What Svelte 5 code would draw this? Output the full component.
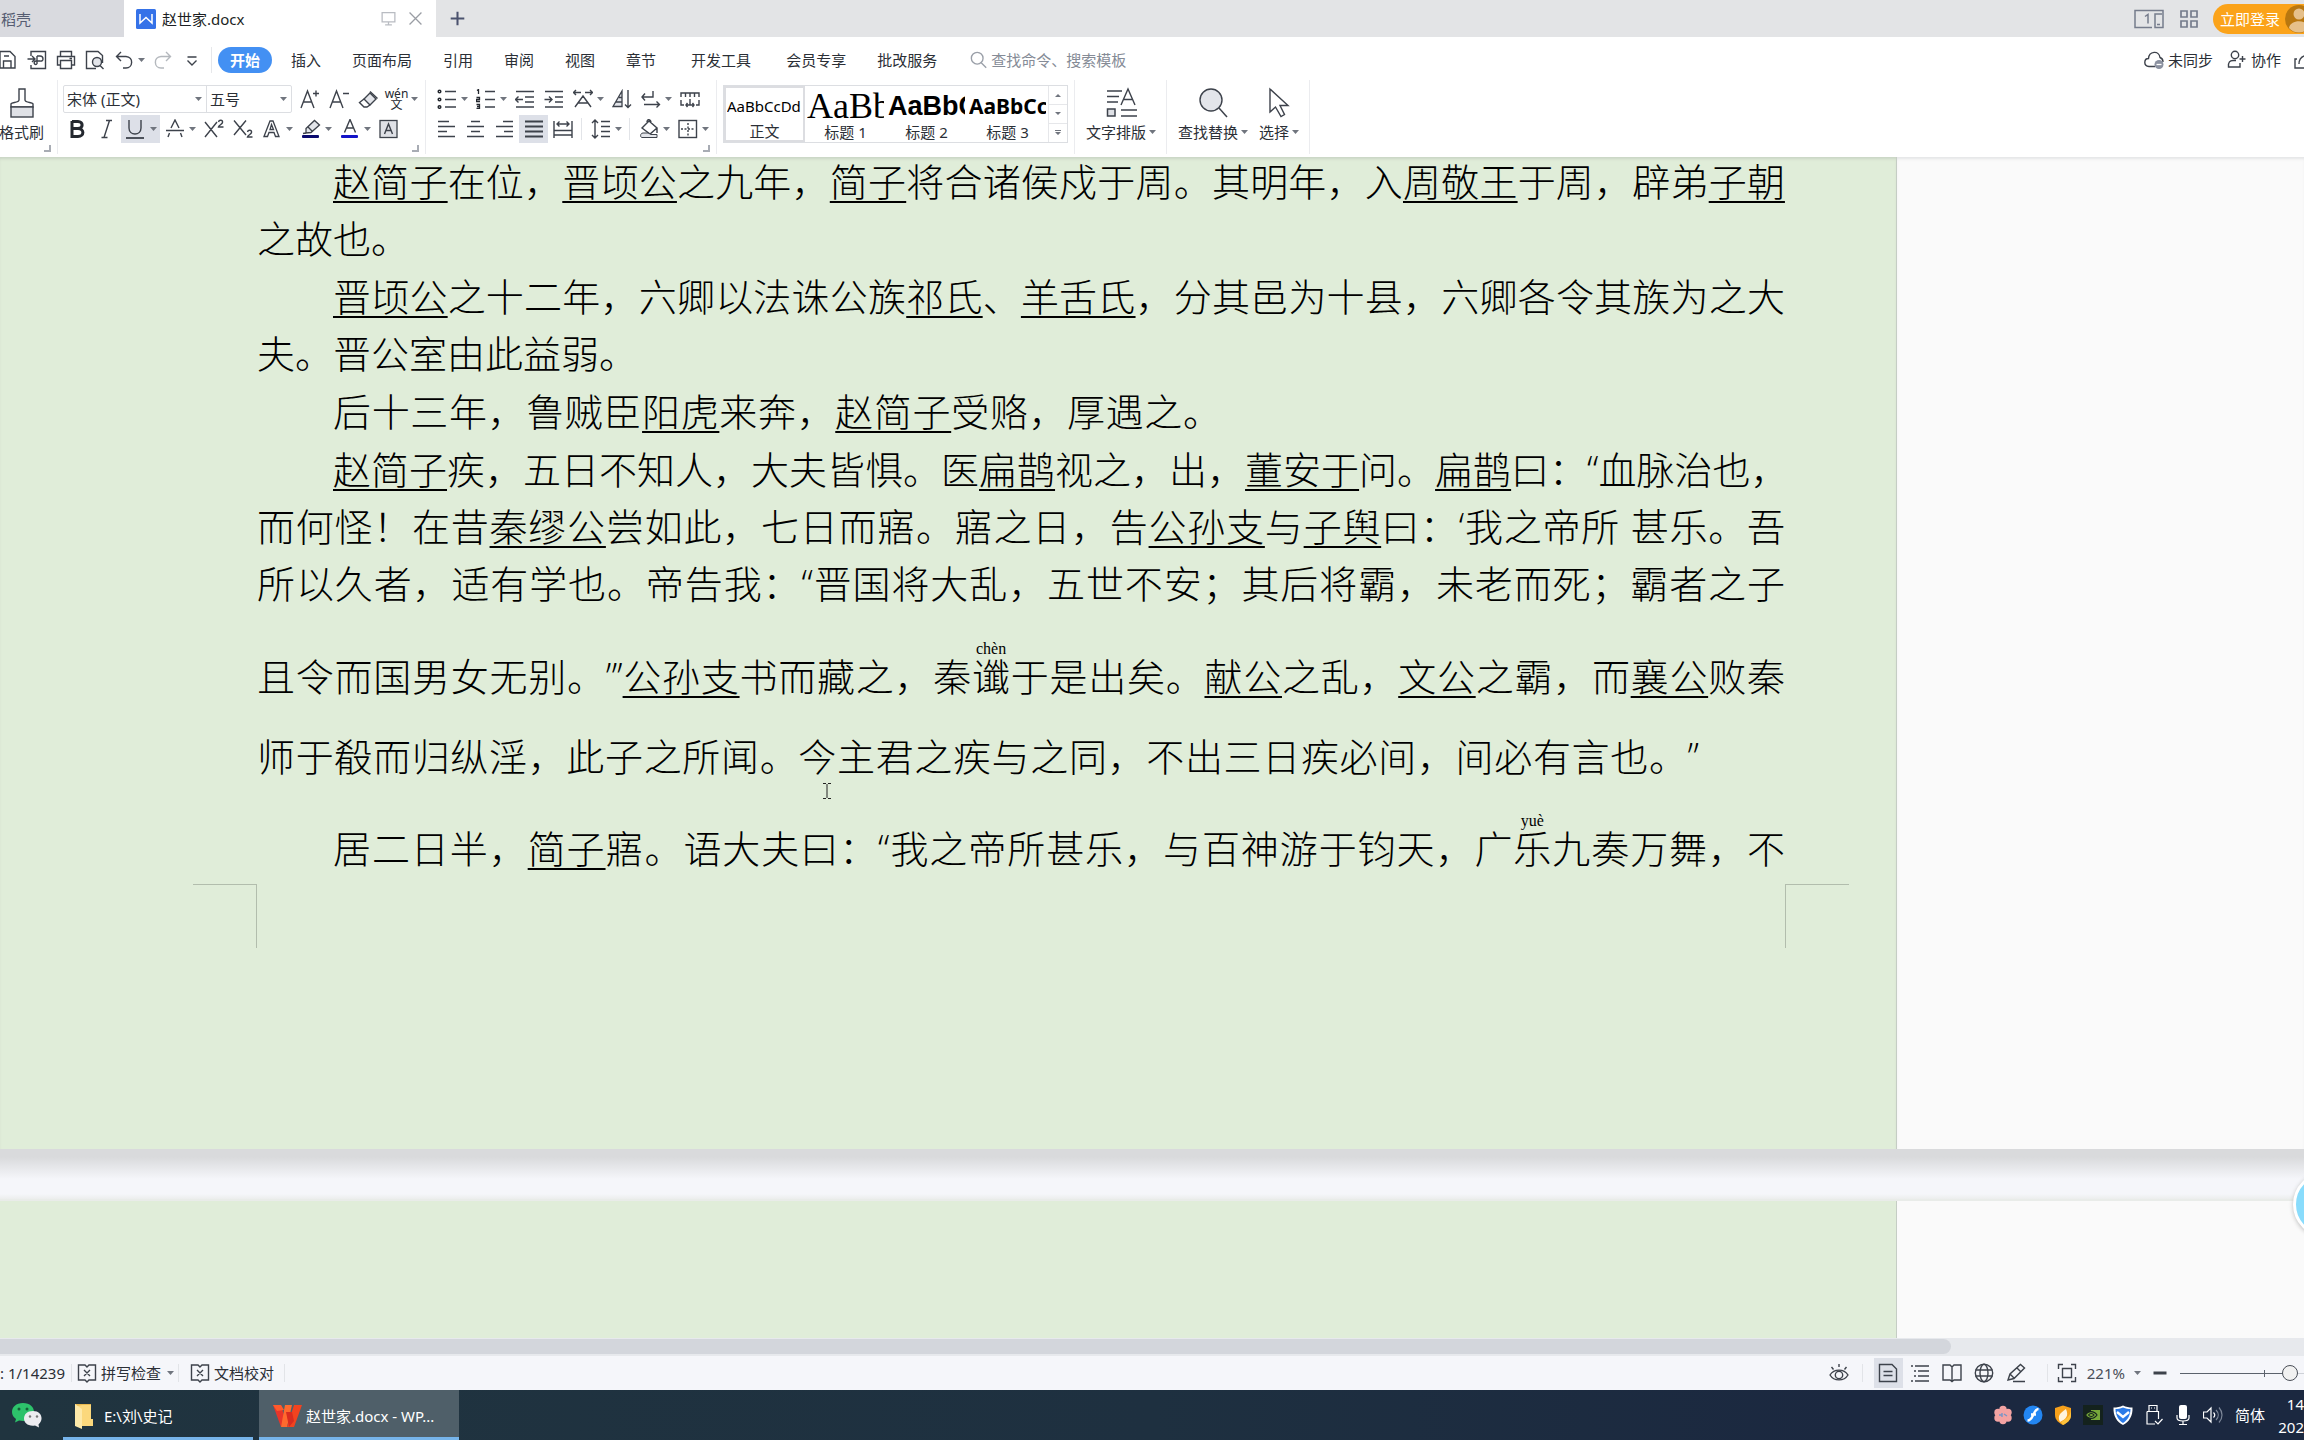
<script>
  const S = 'fill="none" stroke="#3d424b" stroke-width="1.4"';
  const T = 'fill="none" stroke="#3d424b" stroke-width="1.8"';

  const icons = {
    save: `<path ${S} d="M2 18V1.5H12L17 6.5V18H2M5.5 18V11H13V18M6 6H11"/>`,
    export: `<path ${S} d="M4 6V1.5H18.500V18.500H4V15M0.500 9H8M5 6L8 9L5 12M10 6V14M10 6H13C17 6 17 12 13 11H9C6 11 7 16 10 14"/>`,
    print: `<path ${S} d="M4.500 6V1.500H15.500V6M4 15H1.500V6.500H18.500V15H16M4.500 10.500H15.500V18.500H4.500ZM13.500 8.500H16"/>`,
    preview: `<path ${S} d="M11 18.500H1.500V1.500H13L17.500 5.500V13"/><circle cx="12" cy="12" r="4.500" fill="#e3e5ea" stroke="#3d424b" stroke-width="1.400"/><path ${S} d="M15 15.500L18.500 19"/>`,
    undo: `<path ${S} d="M7 2L2.500 6.500L7 11M3 6.500H12C20 7 19 18 12 18H9"/>`,
    redo: `<path fill="none" stroke="#b4b8bd" stroke-width="1.400" d="M13 2L17.500 6.500L13 11M17 6.500H8C0 7 1 18 8 18H11"/>`,
    more: `<path ${S} d="M5.500 7H14.500M5.500 10.500L10 15L14.500 10.500"/>`,
    growA: `<path ${S} d="M1 19L7.500 2L14 19M3.500 13H11.500M13 4.500H19M16 1.500V7.500"/>`,
    shrinkA: `<path ${S} d="M1 19L7.500 2L14 19M3.500 13H11.500M14 4.500H20"/>`,
    eraser: `<path fill="#e3e5ea" stroke="#3d424b" stroke-width="1.400" d="M6 10L12 4L18 10L12 16Z"/><path ${S} d="M6 10L1.500 13.500L6 18H9L12 16M12 2.500L19.500 9.500"/>`,
    bold: `<path fill="none" stroke="#24282f" stroke-width="3" d="M4 2.500H10C15.500 2.500 15.500 9.500 10 9.500H4M10 9.500C16.500 9.500 16.500 17.500 10 17.500H4V2"/>`,
    italic: `<path ${S} d="M9 1.500H15M4.500 18.500H10.500M12.500 1.500L7 18.500"/>`,
    underline: `<path ${S} d="M3 1V9C3 17 15 17 15 9V1"/><path ${T} d="M0 19H18"/>`,
    strike: `<path ${S} d="M6 9L10 1L14 9M1 11.500H19M4.500 14L3 18M15.500 14L17 18"/>`,
    sup: `<path ${S} d="M1 3L13 18M13 3L1 18M14.500 3C15 0.500 19 0.500 18.500 3.500C18 5.500 15 6 14.500 8H19.500"/>`,
    sub: `<path ${S} d="M1 1.500L13 16M13 1.500L1 16M14.500 13C15 10.500 19 10.500 18.500 13.500C18 15.500 15 16 14.500 18H19.500"/>`,
    outlineA: `<path fill="#fff" stroke="#3d424b" stroke-width="1.300" d="M2 17.500L8 2H11L17 17.500H13.500L12 13.500H7L5.500 17.500ZM8 10.500H11.500L9.500 5.500Z"/>`,
    highlight: `<path fill="#e3e5ea" stroke="#3d424b" stroke-width="1.300" d="M5 9.500L13.500 1.500L18.500 6L10 13.500L5 14Z"/><path ${S} d="M7 8L11.500 12.500M5 14L2 14.500"/><rect x="1" y="16" width="17" height="3" rx="1" fill="#0a0a6e"/>`,
    colorA: `<path ${S} d="M4.500 13.500L10 0.500L15.500 13.500M6.500 9H13.500"/><rect x="1" y="16" width="17" height="3" rx="1" fill="#1414c8"/>`,
    boxA: `<rect x="1" y="1.500" width="17" height="17" fill="#dfe1e6" stroke="#3d424b" stroke-width="1.300"/><path ${S} d="M5.500 15L9.500 5L13.500 15M7 11.500H12"/>`,
    bullets: `<path ${S} d="M8 2.500H19M8 10.500H19M8 18H19"/><g fill="none" stroke="#24282f" stroke-width="1.500"><circle cx="2.500" cy="2.500" r="1.300"/><circle cx="2.500" cy="10.500" r="1.300"/><circle cx="2.500" cy="18" r="1.300"/></g>`,
    numbers: `<path ${S} d="M9 2.500H19M9 10.500H19M9 18H19"/><path fill="none" stroke="#24282f" stroke-width="1.300" d="M1 1.500L2.500 0.500V5M0.500 8.500H3.500V10.500H0.500V12.500H4M0.500 15.500H3.500V19.500H0.500M1 17.500H3.500"/>`,
    outdent: `<path ${S} d="M1 2.500H19M10 8H19M10 13H19M1 18H19M0.500 10.500H8M3.500 7.500L0.500 10.500L3.500 13.500"/>`,
    indent: `<path ${S} d="M1 2.500H19M11 8H19M11 13H19M1 18H19M0.500 10.500H8M5 7.500L8 10.500L5 13.500"/>`,
    scaleA: `<path ${S} d="M2 18L10 7L18 18M5.500 14H14.500M0.500 3.500H8M3 1L0.500 3.500L3 6M12 3.500H19.500M17 1L19.500 3.500L17 6"/>`,
    sort: `<path fill="#e3e5ea" stroke="#3d424b" stroke-width="1.300" d="M1 17.500L10 2V17.500ZM4 13H10M7 8.500H10"/><path ${S} d="M16 1V18.500M13 15.500L16 18.500L19 15.500"/>`,
    wrap: `<path ${S} d="M12 2V8H1M4 4.500L1 8L4 11.500M3 15.500H18.500M15.500 12.500L18.500 15.500L15.500 18.500"/>`,
    ruler: `<path ${S} d="M1 8V4H19V8M5.500 4V8M10 4V8M14.500 4V8M1 11V16H4M19 11V16H16M10 10V16M6 16H14M7.500 14L6 16L7.500 18M12.500 14L14 16L12.500 18"/>`,
    left: `<path ${S} d="M1 2.500H12M1 7.500H18M1 12.500H10M1 17.500H18"/>`,
    center: `<path ${S} d="M5 2.500H14M1 7.500H18M5 12.500H14M1 17.500H18"/>`,
    right: `<path ${S} d="M8 2.500H18M1 7.500H18M9 12.500H18M1 17.500H18"/>`,
    justify: `<path ${T} d="M1 2.500H19M1 7.500H19M1 12.500H19M1 17.500H19"/>`,
    distribute: `<path ${S} d="M1 2V19M19 2V19M4 5H16M6.500 2.500L4 5L6.500 7.500M13.500 2.500L16 5L13.500 7.500M1 11.500H19M1 16H19"/>`,
    spacing: `<path ${S} d="M4 1V19M1 4L4 1L7 4M1 16L4 19L7 16M10 2.500H19M10 7.500H19M10 12.500H19M10 17.500H19"/>`,
    bucket: `<path ${S} d="M3 9L10 2L18 9L11 15ZM8 3C8 -0.500 12 0 12 4M18 9V14"/><path fill="#e3e5ea" stroke="#3d424b" stroke-width="1" d="M4 14H9L12 15.500H18V18.500H3C1 18.500 1 14 4 14Z"/>`,
    border: `<rect x="1" y="1.500" width="17.500" height="17" ${S}/><path ${S} stroke-dasharray="2 1.500" d="M10 4V17M3 10H17"/>`,
    monitor: `<path fill="none" stroke="#b9bcc2" stroke-width="1.500" d="M2.500 3H17.500V14H2.500ZM10 14V17M6 17.500H14"/>`,
    close: `<path fill="none" stroke="#9a9da4" stroke-width="1.500" d="M3 3L17 17M17 3L3 17"/>`,
    plus: `<path fill="none" stroke="#4b526e" stroke-width="2.400" d="M10 2V18M2 10H18"/>`,
    wps: `<rect width="20" height="20" rx="1.500" fill="#3572e8"/><path fill="none" stroke="#fff" stroke-width="1.500" d="M4 5V14L10 8.500L16 14V5"/>`,
    search: `<circle cx="8" cy="8" r="6.500" fill="none" stroke="#9a9fa8" stroke-width="1.500"/><path fill="none" stroke="#9a9fa8" stroke-width="1.500" d="M12.500 13L18 18.500"/>`,
    grid: `<path fill="none" stroke="#767c8c" stroke-width="1.700" d="M2 2H8V8H2ZM12 2H18V8H12ZM2 12H8V18H2ZM12 12H18V18H12Z"/>`,
    cloud: `<path ${S} d="M11 16.500H5C-1 16 0 8.500 4.500 8.500C5 1 15 0 16 7.500C19 8.500 19 10 19 12"/><circle cx="15" cy="14.500" r="4.500" fill="#8b91a0"/><path stroke="#fff" stroke-width="1.300" d="M12.500 14.500H17.500"/>`,
    person: `<circle cx="8" cy="5" r="3.700" ${S}/><path ${S} d="M13 13V17H1.500C1 12 3 10.500 6 10.500H9M12.500 9H18.500M15.500 6V12"/>`,
    share: `<path ${S} d="M3 9H1V18H20M5 14C5 8 9 5 16 5"/>`,
    proof: `<path ${S} d="M1.500 2H8L10 4L12 2H18.500V17H12L10 19L8 17H1.500ZM7 7L13 13M13 7L7 13"/>`,
    eye: `<path ${S} d="M1 12C5 5.500 15 5.500 19 12C15 18.500 5 18.500 1 12ZM10 1V4M2.500 4L4.500 6.500M17.500 4L15.500 6.500"/><circle cx="10" cy="12" r="3.700" ${S}/>`,
    page: `<path ${S} d="M1.500 1.500H14L18.500 6V18.500H1.500ZM5.500 8.500H14.500M5.500 12.500H14.500"/>`,
    outline: `<path ${S} d="M5 3H19M8 8H19M8 13H19M5 18H19M1 3H3M4 8H6M4 13H6M1 18H3"/>`,
    book: `<path ${S} d="M10 4V18.500M10 4L8 2H1V17H8L10 18.500L12 17H19V2H12Z"/>`,
    globe: `<circle cx="10" cy="10" r="8.700" ${S}/><ellipse cx="10" cy="10" rx="4" ry="8.700" ${S}/><path ${S} d="M1.500 7H18.500M1.500 13H18.500"/>`,
    pen: `<path ${S} d="M2 17L4 11L14.500 1.500L18.500 5L8 15.500ZM4 11L8 15M7 18.500H19M11 5L15 9"/>`,
    fit: `<path ${S} d="M1.500 6V1.500H6M14 1.500H18.500V6M18.500 14V18.500H14M6 18.500H1.500V14M5.500 5.500H14.500V14.500H5.500Z"/>`,
    minus: `<path stroke="#3d424b" stroke-width="3" d="M3.500 10H16.500"/>`
  };

  const qat = [
    ['save', '保存'], ['export', '输出为PDF'], ['print', '打印'], ['preview', '打印预览'],
    ['undo', '撤消', true], ['redo', '恢复'], ['more', '自定义']
  ];
  const menus = ['开始', '插入', '页面布局', '引用', '审阅', '视图', '章节', '开发工具', '会员专享', '批改服务'];
  const fontRow = [
    ['bold', '加粗'], ['italic', '倾斜'], ['underline', '下划线', true, true], ['strike', '删除线', true],
    ['sup', '上标'], ['sub', '下标'], ['outlineA', '文字效果', true], ['highlight', '突出显示', true],
    ['colorA', '字体颜色', true], ['boxA', '字符底纹']
  ];
  const paraTop = [
    ['bullets', '项目符号', true], ['numbers', '编号', true], ['outdent', '减少缩进量'], ['indent', '增加缩进量'],
    ['scaleA', '中文版式', true], ['sort', '排序'], ['wrap', '显示编辑标记', true], ['ruler', '制表位']
  ];
  const alignRow = [
    ['left', '左对齐'], ['center', '居中'], ['right', '右对齐'], ['justify', '两端对齐', false, true], ['distribute', '分散对齐']
  ];
  const gallery = [
    ['AaBbCcDd', '正文', 'normal'], ['AaBb', '标题 1', 'h1'], ['AaBbC', '标题 2', 'h2'], ['AaBbCc', '标题 3', 'h3']
  ];
  const views = [['page', '页面视图', true], ['outline', '大纲'], ['book', '阅读版式'], ['globe', 'Web版式'], ['pen', '写作模式']];

  // Underlined names are wrapped in brackets; {base|reading} adds a reading above a character.
  const paragraphs = [
    [
      { t: '[赵简子]在位，[晋顷公]之九年，[简子]将合诸侯戍于周。其明年，入[周敬王]于周，辟弟[子朝]', c: 'first full' },
      { t: '之故也。', c: '' }
    ],
    [
      { t: '[晋顷公]之十二年，六卿以法诛公族[祁氏]、[羊舌氏]，分其邑为十县，六卿各令其族为之大', c: 'first full' },
      { t: '夫。晋公室由此益弱。', c: '' }
    ],
    [{ t: '后十三年，鲁贼臣[阳虎]来奔，[赵简子]受赂，厚遇之。', c: 'first full short' }],
    [
      { t: '[赵简子]疾，五日不知人，大夫皆惧。医[扁鹊]视之，出，[董安于]问。[扁鹊]曰：“血脉治也，', c: 'first' },
      { t: '而何怪！在昔[秦缪公]尝如此，七日而寤。寤之日，告[公孙支]与[子舆]曰：‘我之帝所 甚乐。吾', c: 'full' },
      { t: '所以久者，适有学也。帝告我：“晋国将大乱，五世不安；其后将霸，未老而死；霸者之子', c: 'full' },
      { t: '且令而国男女无别。”’[公孙支]书而藏之，秦{谶|chèn}于是出矣。[献公]之乱，[文公]之霸，而[襄公]败秦', c: 'full tall above' },
      { t: '师于殽而归纵淫，此子之所闻。今主君之疾与之同，不出三日疾必间，间必有言也。”', c: 'full tall ending' }
    ],
    [{ t: '居二日半，[简子]寤。语大夫曰：“我之帝所甚乐，与百神游于钧天，广{乐|yuè}九奏万舞，不', c: 'first full tall close' }]
  ];

  const parse = (text) =>
    text.split(/(\[[^\]]+\]|\{[^}]+\})/).filter(Boolean).map((part) => {
      if (part[0] === '[') return { kind: 'name', text: part.slice(1, -1) };
      if (part[0] === '{') {
        const [base, reading] = part.slice(1, -1).split('|');
        return { kind: 'ruby', text: base, reading };
      }
      return { kind: 'plain', text: part };
    });

  let zoom = $state(94);
</script>

{#snippet icon(name)}
  <svg class="icon" viewBox="0 0 20 20" aria-hidden="true">{@html icons[name]}</svg>
{/snippet}

{#snippet caret()}
  <svg class="caret" viewBox="0 0 10 6" aria-hidden="true"><path d="M0 1H7L3.500 5Z" fill="#70757e" /></svg>
{/snippet}

{#snippet tool([name, label, drop, on])}
  <button class="tool" class:on aria-label={label}>
    <span class="cell">{@render icon(name)}</span>{#if drop}{@render caret()}{/if}
  </button>
{/snippet}

<div class="app">
  <header class="tabs">
    <button class="tab idle">稻壳</button>
    <div class="tab active">
      {@render icon('wps')}
      <span class="title">赵世家.docx</span>
      <button class="mini" aria-label="窗口显示">{@render icon('monitor')}</button>
      <button class="mini" aria-label="关闭标签">{@render icon('close')}</button>
    </div>
    <button class="mini add" aria-label="新建标签">{@render icon('plus')}</button>
    <div class="account">
      <button class="mini" aria-label="窗口排列">
        <svg class="wide-icon" viewBox="0 0 30 20" aria-hidden="true">
          <path d="M18 18.500H1V1.500H29V18.500H21V5H28M11 7.500L14 5.500V14.500M23 15.500H26" fill="none" stroke="#767c8c" stroke-width="1.500" />
        </svg>
      </button>
      <button class="mini" aria-label="应用">{@render icon('grid')}</button>
      <button class="login">立即登录
        <svg class="avatar" viewBox="0 0 28 28" aria-hidden="true">
          <circle cx="14" cy="14" r="14" fill="#b9770f" /><circle cx="14" cy="9" r="5.500" fill="#e6c08a" />
          <path d="M4 23C5 14 23 14 24 23C19 29 9 29 4 23Z" fill="#e6c08a" />
        </svg>
      </button>
    </div>
  </header>

  <div class="menubar">
    <div class="qat">
      {#each qat as item}{@render tool(item)}{/each}
    </div>
    <nav class="menus">
      {#each menus as m, i}
        <button class="menu" class:pill={i === 0} class:spaced={i === 7 || i === 8}>{m}</button>
      {/each}
    </nav>
    <label class="search">
      {@render icon('search')}
      <input type="text" placeholder="查找命令、搜索模板" aria-label="查找命令" />
    </label>
    <div class="sync">
      <button class="link">{@render icon('cloud')}未同步</button>
      <button class="link">{@render icon('person')}协作</button>
      <button class="link cut" aria-label="分享">{@render icon('share')}</button>
    </div>
  </div>

  <div class="ribbon">
    <div class="group clip">
      <button class="big">
        <svg class="big-icon" viewBox="0 0 32 32" aria-hidden="true">
          <path d="M5 20V17C5 15 13 16 13 13V2H19V13C19 16 27 15 27 17V20Z" fill="none" stroke="#3d424b" stroke-width="1.400" />
          <rect x="5" y="20" width="22" height="10" fill="#dfe1e6" stroke="#3d424b" stroke-width="1.400" />
        </svg>
        <span>格式刷</span>
      </button>
      <i class="corner"></i>
    </div>

    <div class="group font">
      <div class="row">
        <div class="combo">
          <span class="pick family"><select aria-label="字体"><option>宋体 (正文)</option></select>{@render caret()}</span>
          <span class="pick size"><select aria-label="字号"><option>五号</option></select>{@render caret()}</span>
        </div>
        {@render tool(['growA', '增大字号'])}
        {@render tool(['shrinkA', '减小字号'])}
        {@render tool(['eraser', '清除格式'])}
        <button class="tool" aria-label="拼音指南">
          <span class="cell pinyin"><span>wén</span><span>文</span></span>{@render caret()}
        </button>
      </div>
      <div class="row">{#each fontRow as item}{@render tool(item)}{/each}</div>
      <i class="corner"></i>
    </div>

    <div class="group para">
      <div class="row">{#each paraTop as item}{@render tool(item)}{/each}</div>
      <div class="row">
        {#each alignRow as item}{@render tool(item)}{/each}
        <i class="bar"></i>
        {@render tool(['spacing', '行距', true])}
        <i class="bar"></i>
        {@render tool(['bucket', '底纹颜色', true])}
        {@render tool(['border', '边框', true])}
      </div>
      <i class="corner"></i>
    </div>

    <div class="group styles">
      <div class="gallery">
        {#each gallery as [sample, name, kind], i}
          <button class="style" class:chosen={i === 0}>
            <span class="sample {kind}">{sample}</span>
            <span class="style-name">{name}</span>
          </button>
        {/each}
        <div class="scrolls">
          <button aria-label="上一行"><svg viewBox="0 0 10 6"><path d="M2 5H8L5 2Z" fill="#70757e" /></svg></button>
          <button aria-label="下一行"><svg viewBox="0 0 10 6"><path d="M2 1H8L5 4Z" fill="#70757e" /></svg></button>
          <button aria-label="更多样式"><svg viewBox="0 0 10 6"><path d="M2 0H8V1H2ZM2 2H8L5 5Z" fill="#70757e" /></svg></button>
        </div>
      </div>
    </div>

    <div class="group wide">
      <button class="big">
        <svg class="big-icon" viewBox="0 0 32 32" aria-hidden="true">
          <path d="M2 4H17M2 9.500H14M2 15H13M16 18L23 2L30 18M18.500 12.500H27.500M16 23H32M16 29H32" fill="none" stroke="#3d424b" stroke-width="1.400" />
          <rect x="2.500" y="22" width="7.500" height="7" fill="#dfe1e6" stroke="#3d424b" stroke-width="1.500" />
        </svg>
        <span>文字排版{@render caret()}</span>
      </button>
    </div>

    <div class="group wide pair">
      <button class="big">
        <svg class="big-icon" viewBox="0 0 32 32" aria-hidden="true">
          <circle cx="14" cy="13" r="11" fill="#e3e5ea" stroke="#3d424b" stroke-width="1.400" />
          <path d="M22 21L30 30" stroke="#3d424b" stroke-width="1.500" />
        </svg>
        <span>查找替换{@render caret()}</span>
      </button>
      <button class="big">
        <svg class="big-icon" viewBox="0 0 32 32" aria-hidden="true">
          <path d="M7 2V25L12.500 20L18 29.500L21.500 27.500L17 18.500L25 18.500Z" fill="#fff" stroke="#3d424b" stroke-width="1.400" />
        </svg>
        <span>选择{@render caret()}</span>
      </button>
    </div>
  </div>

  <main class="workspace">
    <section class="sheet">
      <article class="page">
        <div class="text" lang="zh-CN">
          {#each paragraphs as lines}
            <p>
              {#each lines as line}
                <span class="line {line.c}">{#each parse(line.t) as part}{#if part.kind === 'name'}<u>{part.text}</u>{:else if part.kind === 'ruby'}<ruby>{part.text}<rt>{part.reading}</rt></ruby>{:else}{part.text}{/if}{/each}</span>
              {/each}
            </p>
          {/each}
        </div>
        <div class="marks"><i class="mark l"></i><i class="mark r"></i></div>
      </article>
      <div class="blank"></div>
    </section>
    <div class="gap"></div>
    <section class="sheet next">
      <article class="page"></article>
      <div class="blank"></div>
    </section>
    <svg class="ibeam" viewBox="0 0 8 16" aria-hidden="true"><path d="M0 0.500H3M5 0.500H8M0 15.500H3M5 15.500H8M4 1V15" fill="none" stroke="#222" /></svg>
    <button class="bubble" aria-label="助手"></button>
  </main>

  <div class="hscroll"><div class="thumb"></div></div>

  <footer class="status">
    <span class="words">: 1/14239</span>
    <i class="bar"></i>
    <button class="link check">{@render icon('proof')}拼写检查{@render caret()}</button>
    <i class="bar"></i>
    <button class="link second">{@render icon('proof')}文档校对</button>
    <i class="bar"></i>
    <div class="right">
      <button class="view" aria-label="护眼模式">{@render icon('eye')}</button>
      <i class="bar"></i>
      <div class="views">
        {#each views as [name, label, on]}
          <button class="view" class:on aria-label={label}>{@render icon(name)}</button>
        {/each}
      </div>
      <i class="bar"></i>
      <button class="view" aria-label="最佳显示比例">{@render icon('fit')}</button>
      <button class="link percent">221%{@render caret()}</button>
      <button class="view" aria-label="缩小">{@render icon('minus')}</button>
      <input class="zoom" type="range" min="0" max="100" bind:value={zoom} aria-label="显示比例" />
    </div>
  </footer>

  <div class="taskbar">
    <button class="wechat" aria-label="微信">
      <svg viewBox="0 0 32 26" aria-hidden="true">
        <path d="M12 1C5 1 1 5 1 10C1 13 2.500 15 5 17L4 20.500L8 18.500C17 20.500 23 16 23 10C23 5 19 1 12 1Z" fill="#2dc26b" />
        <circle cx="8" cy="7" r="1.500" fill="#17603a" /><circle cx="16" cy="7" r="1.500" fill="#17603a" />
        <path d="M22 9C16 9 13 12.500 13 16.500C13 21 17 24.500 24 23.500L28 25.500L27.500 22.500C33 18 31 9 22 9Z" fill="#ececf0" />
        <circle cx="19" cy="14.500" r="1.200" fill="#777" /><circle cx="26" cy="14.500" r="1.200" fill="#777" />
      </svg>
    </button>
    <button class="task">
      <svg viewBox="0 0 20 28" aria-hidden="true">
        <path d="M1 2H17V23H7V26L1 22Z" fill="#e9b950" /><path d="M3 4L8 3H17V17H19V24H7Z" fill="#fbd87c" /><path d="M1 2L8 7V27L1 24Z" fill="#fde9a9" />
      </svg>
      E:\刘\史记
    </button>
    <button class="task current">
      <svg class="logo" viewBox="0 0 30 24" aria-hidden="true">
        <path d="M1 1H9L13 15L9 23Z" fill="#e8352a" /><path d="M1 1L9 1L12 6L5 7Z" fill="#ff5a2b" />
        <path d="M13 1H20L15 23H9Z" fill="#ff6a2e" /><path d="M22 1H30L22 23H15Z" fill="#f2431f" /><path d="M14 8L20 8L22 17L17 23Z" fill="#d92b1f" />
      </svg>
      赵世家.docx - WP...
    </button>
    <div class="tray">
      <button aria-label="花"><svg viewBox="0 0 20 20"><g fill="#f3a3a3"><circle cx="10" cy="4.500" r="3.700" /><circle cx="15" cy="7.500" r="3.700" /><circle cx="15" cy="13" r="3.700" /><circle cx="10" cy="15.500" r="3.700" /><circle cx="5" cy="13" r="3.700" /><circle cx="5" cy="7.500" r="3.700" /><circle cx="10" cy="10" r="5" /></g><path d="M6 10H9M11 9L14 11M9 8V12" stroke="#7795c8" stroke-width="1.400" fill="none" /></svg></button>
      <button aria-label="Flash"><svg viewBox="0 0 20 20"><circle cx="10" cy="10" r="9.500" fill="#2386f2" /><path d="M15.500 4C10 4 11 15.500 4.500 15.500M8 9.500H13" fill="none" stroke="#fff" stroke-width="2.400" /></svg></button>
      <button aria-label="安全防护"><svg viewBox="0 0 20 20"><path d="M10 0.500L18 3V10C18 15 14 18 10 20C6 18 2 15 2 10V3Z" fill="#f6a01b" /><path d="M13 4C7 8 4 11 7 17C13 14 16 11 13 4Z" fill="#fff3dc" /><path d="M10 20C14 18 18 15 18 10V5C17 12 13 14 8 17Z" fill="#ffc23c" /></svg></button>
      <button aria-label="NVIDIA"><svg viewBox="0 0 20 20"><rect width="20" height="20" fill="#14221d" /><path d="M8 5H17V15H8Z" fill="#77a83a" /><path d="M2.500 10C5 5.500 11 5.500 14 10C11 14.500 5 14.500 2.500 10ZM5.500 10C7 8 9.500 8 11 10C9.500 12 7 12 5.500 10Z" fill="#77a83a" stroke="#14221d" stroke-width="1.200" /></svg></button>
      <button aria-label="电脑管家"><svg viewBox="0 0 20 20"><path d="M10 0.500C13 2 16 2.500 19.500 2.500C20 11 16 17 10 20C4 17 0 11 0.500 2.500C4 2.500 7 2 10 0.500Z" fill="#fff" /><path d="M10 2.500C13 3.500 15 4 17.500 4C17.500 11 14 15.500 10 18C6 15.500 2.500 11 2.500 4C5 4 7 3.500 10 2.500Z" fill="#2c7be8" /><path d="M4 7L10 12L16 7" fill="none" stroke="#fff" stroke-width="2.400" /></svg></button>
      <button aria-label="USB"><svg viewBox="0 0 20 20"><path d="M6 6V0.500H14V6M4 6.500H15.500V14M4 6.500V19H12M8 3H9M11 3H12M12 16L15 19L19.500 14" fill="none" stroke="#fff" stroke-width="1.200" /></svg></button>
      <button aria-label="麦克风"><svg viewBox="0 0 20 20"><rect x="6" y="0" width="8" height="14" rx="2" fill="#fff" /><path d="M4 10V13C4 17 16 17 16 13V10M10 16V19.500M6 19.500H14" fill="none" stroke="#fff" stroke-width="1.200" /></svg></button>
      <button aria-label="音量"><svg viewBox="0 0 20 20"><path d="M0.500 7H4L8 3V17L4 13H0.500ZM10.500 7.500C12 9 12 11 10.500 12.500" fill="none" stroke="#fff" stroke-width="1.200" /><path d="M13 5C16 8 16 12 13 15M16 2.500C20 7 20 13 16 17.500" fill="none" stroke="#7d8798" stroke-width="1.200" /></svg></button>
      <button class="ime">简体</button>
    </div>
    <div class="clock"><span>14</span><span>202</span></div>
  </div>
</div>

<style>
  :global(body) { margin: 0; }
  .app {
    min-height: 100vh; display: flex; flex-direction: column; overflow: hidden; background: #fff; color: #2b2f36;
    font: 15px/20px "Noto Sans", "Noto Sans CJK SC", sans-serif;
  }
  button, input, select { font: inherit; color: inherit; border: 0; padding: 0; margin: 0; background: none; }
  button { display: flex; align-items: center; justify-content: center; white-space: nowrap; }
  svg { display: block; flex: none; }
  .icon { width: 20px; height: 20px; }
  .caret { width: 10px; height: 6px; }

  .tabs { height: 37px; display: flex; align-items: stretch; background: #e3e4e6; }
  .tab { box-sizing: border-box; display: flex; align-items: center; }
  .idle { width: 124px; justify-content: flex-start; padding-left: 1px; background: #d9dadf; color: #565d72; }
  .active { width: 312px; padding: 0 7px 0 12px; background: #fff; color: #1c1f24; }
  .title { flex: 1; padding-left: 6px; }
  .mini { width: 27px; }
  .mini .icon { width: 17px; height: 17px; }
  .add { width: 43px; }
  .account { margin-left: auto; display: flex; align-items: center; }
  .account .mini { width: 40px; }
  .account .mini .icon { width: 20px; height: 20px; }
  .wide-icon { width: 30px; height: 20px; }
  .login { margin-left: 4px; height: 30px; padding-left: 7px; gap: 5px; border-radius: 15px 0 0 15px; background: #fba31a; color: #fff; overflow: hidden; width: 91px; box-sizing: border-box; justify-content: flex-start; }
  .avatar { width: 28px; height: 28px; }

  .menubar { height: 40px; padding-top: 3px; display: flex; align-items: center; }
  .qat { display: flex; height: 26px; margin-left: -7px; overflow: hidden; box-sizing: border-box; border-right: 1px solid #e6e7ea; width: 219px; }
  .menus { display: flex; gap: 31px; margin-left: 6px; }
  .menu { height: 26px; }
  .pill { padding: 0 12px; margin-right: -12px; border-radius: 13px; background: #4390f3; color: #fff; font-weight: 700; }
  .spaced { margin-left: 4px; }
  .search { display: flex; align-items: center; gap: 3px; margin-left: 33px; color: #7d8491; }
  .search .icon { width: 18px; height: 18px; }
  .search input { width: 160px; outline: 0; }
  .search input::placeholder { color: #858b96; opacity: 1; }
  .sync { margin-left: auto; display: flex; gap: 14px; }
  .link { gap: 4px; }
  .cut { width: 10px; overflow: hidden; justify-content: flex-start; margin-left: -1px; }

  .ribbon { height: 77px; display: flex; align-items: stretch; box-sizing: border-box; padding-bottom: 3px; }
  .group { position: relative; display: flex; flex-direction: column; gap: 2px; padding-top: 5px; box-sizing: border-box; border-right: 1px solid #ebecef; }
  .clip { width: 58px; }
  .clip .big { align-self: flex-start; margin-left: -1px; }
  .font { width: 368px; padding-left: 5px; }
  .para { width: 291px; padding-left: 6px; }
  .styles { width: 358px; padding-left: 6px; }
  .wide { padding-left: 11px; padding-right: 10px; }
  .pair { flex-direction: row; gap: 11px; }
  .row { display: flex; height: 28px; }
  .tool { flex: none; height: 28px; }
  .qat .tool { height: 26px; }
  .cell { width: 29px; display: flex; justify-content: center; }
  .on { background: #dde0e8; }
  .pinyin { flex-direction: column; align-items: center; font-size: 12px; line-height: 11px; color: #24282f; }
  .bar { width: 1px; margin: 3px 4px; background: #e2e4e8; }
  .corner { position: absolute; right: 6px; bottom: 2px; width: 5px; height: 5px; border: solid #a8acb4; border-width: 0 2px 2px 0; }
  .combo { display: flex; box-sizing: border-box; width: 229px; margin-right: 3px; border: 1px solid #dcdee2; border-radius: 2px; }
  .pick { display: grid; align-items: center; }
  .pick > :global(*) { grid-area: 1 / 1; }
  .pick .caret { justify-self: end; margin-right: 1px; pointer-events: none; }
  .family { width: 142px; border-right: 1px solid #dcdee2; }
  .size { flex: 1; }
  .pick select { appearance: none; width: 100%; padding-left: 3px; outline: 0; }

  .big { flex-direction: column; justify-content: flex-start; gap: 3px; }
  .big-icon { width: 32px; height: 32px; margin-top: 2px; }
  .big span { display: flex; align-items: center; gap: 3px; line-height: 20px; }
  .big .caret { margin-right: -3px; }

  .gallery { display: flex; height: 58px; width: 345px; box-sizing: border-box; border: 1px solid #dcdee2; }
  .style { box-sizing: border-box; width: 81px; flex-direction: column; justify-content: flex-start; padding: 0 2px; border: 1px solid transparent; overflow: hidden; }
  .chosen { border: 2px solid #dcdde1; padding: 0 1px; }
  .sample { width: 77px; height: 36px; line-height: 38px; overflow: hidden; text-align: left; color: #000; }
  .chosen .sample { width: 75px; margin-top: -1px; }
  .h1 { font-family: "Liberation Serif", serif; font-size: 36px; }
  .h2 { font-family: "Liberation Sans", sans-serif; font-size: 27px; font-weight: 700; }
  .h3 { font-size: 21px; font-weight: 700; }
  .style-name { line-height: 18px; }
  .scrolls { flex: 1; display: flex; flex-direction: column; border-left: 1px solid #e6e7ea; }
  .scrolls button { flex: 1; }
  .scrolls button + button { border-top: 1px solid #e6e7ea; }
  .scrolls svg { width: 10px; height: 6px; }

  .workspace { position: relative; flex: 1; display: flex; flex-direction: column; overflow: hidden; }
  .sheet { display: flex; }
  .page { flex: 1; background: #e0edd9; border-right: 1px solid #c5cdc4; }
  .sheet:first-child .page { box-shadow: inset 0 3px 3px -1px #c9d4c4; overflow: hidden; }
  .next { flex: 1; }
  .blank { width: 407px; background: #fafafa; }
  .sheet:first-child .blank { box-shadow: inset 0 3px 3px -1px #e4e5e6; }
  .gap { height: 52px; box-sizing: border-box; background: linear-gradient(#d9dadc 0 16%, #f5f6fa 60% 90%, #eceeed); border-bottom: 2px solid #e9ece9; }
  .text {
    margin-top: -4px; padding: 0 111px 0 257px; color: #000; text-spacing-trim: space-all;
    font-family: "Open Sans", "Noto Sans CJK SC", sans-serif; font-size: 38px; font-weight: 300; line-height: 57px;
  }
  p { margin: 0 0 1px; }
  .line { display: block; white-space: nowrap; }
  .full { text-align: justify; text-align-last: justify; white-space: normal; }
  .first { text-indent: 76px; }
  .short { padding-right: 564px; }
  .ending { padding-right: 86px; }
  .tall { line-height: 80px; }
  .above { padding-top: 24px; }
  .close { padding-top: 11px; }
  u { text-decoration-thickness: 2px; text-underline-offset: 5px; text-decoration-skip-ink: none; }
  ruby { text-indent: 0; }
  rt { font: 16px/4px "Liberation Serif", serif; }
  .marks { display: flex; justify-content: space-between; margin: -5px 47px 0 193px; padding-bottom: 201px; }
  .mark { width: 64px; height: 64px; box-sizing: border-box; border-top: 1px solid #b2bdad; }
  .mark.l { border-right: 1px solid #b2bdad; }
  .mark.r { border-left: 1px solid #b2bdad; }
  .ibeam { position: absolute; left: 823px; top: 626px; width: 8px; height: 16px; }
  .bubble { position: absolute; right: -54px; top: 1015px; width: 65px; height: 65px; box-sizing: border-box; border: 3px solid #fff; border-radius: 50%; background: #89dcfc; box-shadow: 0 1px 4px #bbb; }

  .hscroll { height: 18px; background: #e7e9ed; padding-top: 1px; box-sizing: border-box; }
  .thumb { width: 84.7%; height: 15px; border-radius: 0 8px 8px 0; background: #d3d6dc; }

  .status { height: 34px; display: flex; align-items: center; background: #f5f6fa; }
  .status .bar { height: 18px; margin: 0 5px; }
  .words { width: 66px; white-space: nowrap; direction: rtl; unicode-bidi: plaintext; }
  .status .second { margin: 0 5px 0 6px; }
  .check .caret { margin: 0 -4px 0 2px; }
  .right { margin-left: auto; display: flex; align-items: center; }
  .views { display: flex; gap: 3px; margin: 0 11px 0 6px; }
  .view { width: 29px; height: 30px; }
  .right > .view:first-child { margin-right: 3px; }
  .percent { margin-left: 5px; color: #4a4f58; }
  .percent .caret { margin-left: 5px; }
  .percent + .view { margin-left: 1px; }
  .zoom {
    appearance: none; width: 124px; height: 20px; margin-left: 6px;
    background: linear-gradient(#5b626c, #5b626c) 84px 50% / 1px 7px no-repeat, linear-gradient(90deg, #5b626c 90%, #cfd2d8 90%) 0 50% / 100% 1px no-repeat;
  }
  .zoom::-webkit-slider-thumb { appearance: none; width: 16px; height: 16px; box-sizing: border-box; border: 1px solid #4a4f58; border-radius: 50%; background: #f1f1f1; }

  .taskbar { height: 50px; display: flex; align-items: stretch; background: linear-gradient(90deg, #20343f, #1e3040 50%, #1b2840 80%); color: #fff; }
  .wechat { width: 63px; padding-right: 10px; box-sizing: border-box; }
  .wechat svg { width: 32px; height: 26px; }
  .task { box-sizing: border-box; width: 190px; justify-content: flex-start; padding: 4px 0 0 11px; gap: 10px; border-bottom: 3px solid #76b4ea; }
  .task svg { width: 20px; height: 28px; }
  .current { width: 200px; margin-left: 6px; padding-left: 13px; gap: 4px; background: #4f5f69; }
  .current .logo { width: 30px; height: 24px; }
  .tray { margin-left: auto; display: flex; align-items: center; }
  .tray button { width: 30px; }
  .tray svg { width: 20px; height: 20px; }
  .tray .ime { margin: 0 12px 0 7px; }
  .clock { width: 27px; display: flex; flex-direction: column; justify-content: center; align-items: flex-end; gap: 3px; overflow: hidden; }
</style>
